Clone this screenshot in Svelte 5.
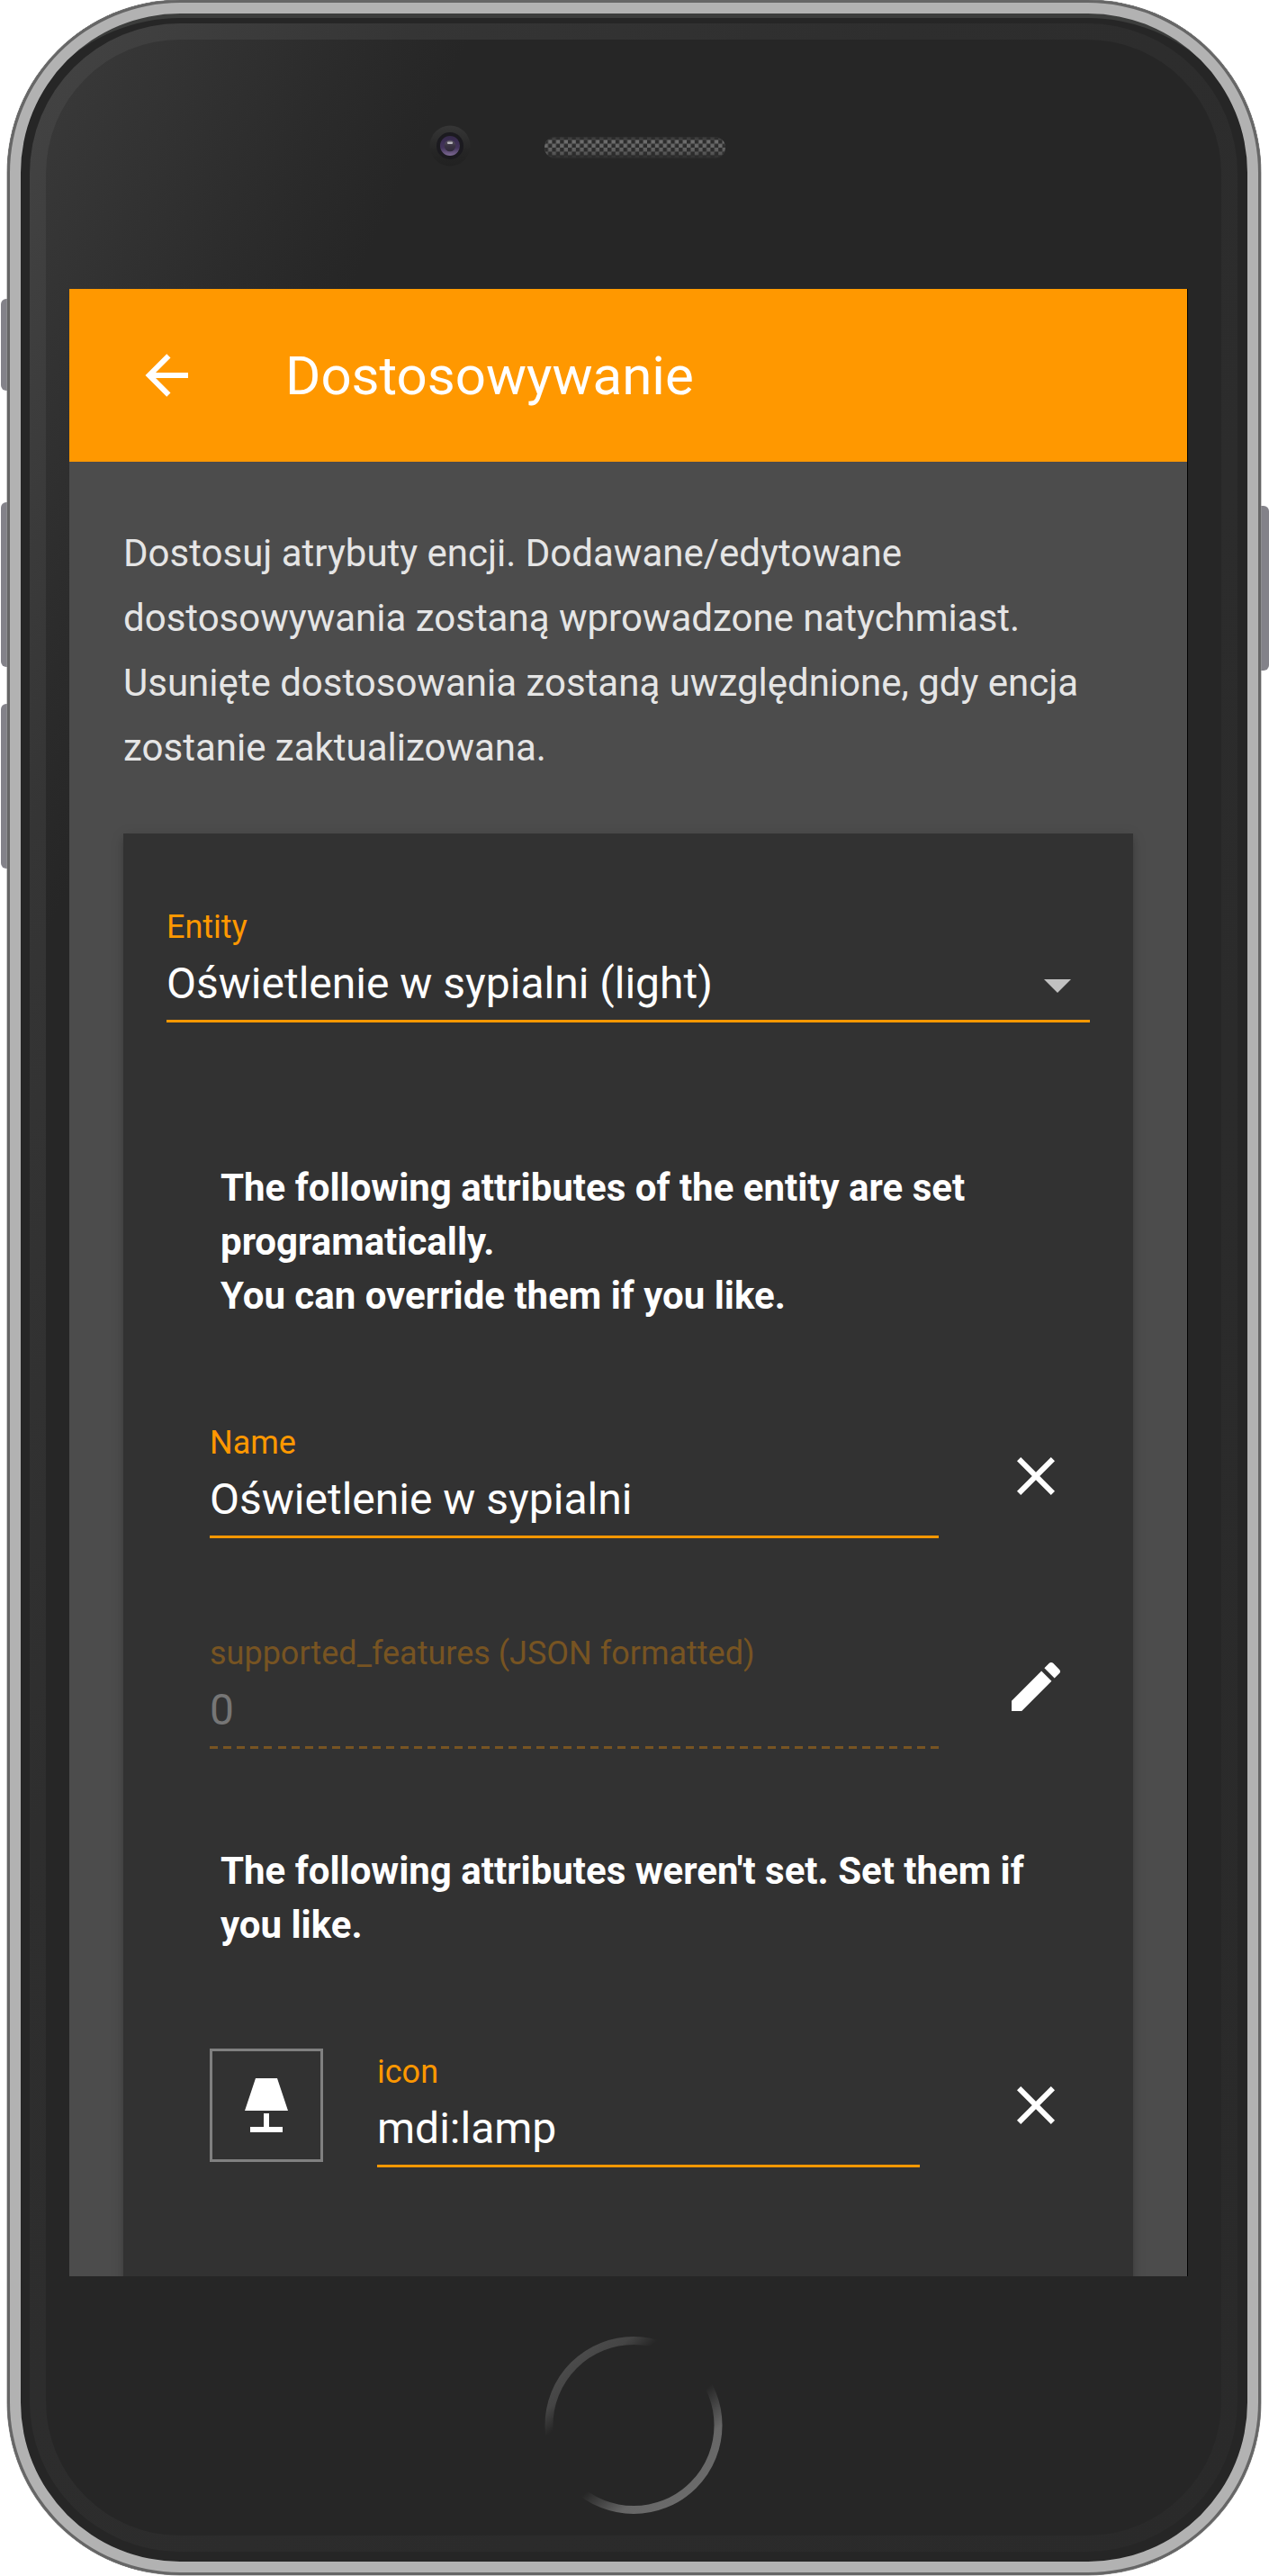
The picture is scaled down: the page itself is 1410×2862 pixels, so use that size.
<script>
  const paths = {
    back: 'M20,11V13H8L13.5,18.5L12.08,19.92L4.16,12L12.08,4.08L13.5,5.5L8,11H20Z',
    close:
      'M19,6.41L17.59,5L12,10.59L6.41,5L5,6.41L10.59,12L5,17.59L6.41,19L12,13.41L17.59,19L19,17.59L13.41,12L19,6.41Z',
    edit: 'M3 17.25V21h3.75L17.81 9.94l-3.75-3.75L3 17.25zM20.71 7.04c.39-.39.39-1.02 0-1.41l-2.34-2.34c-.39-.39-1.02-.39-1.41 0l-1.83 1.83 3.75 3.75 1.83-1.83z',
    lamp: 'M8,2H16L20,14H4L8,2M11,15H13V20H18V22H6V20H11V15Z',
    down: 'M7,10L12,15L17,10H7Z',
  };
</script>

{#snippet icon(name)}
  <svg class="icon {name}" viewBox="0 0 24 24"><path d={paths[name]} /></svg>
{/snippet}

<div class="device">
  <span class="key mute"></span>
  <span class="key up"></span>
  <span class="key volume"></span>
  <span class="key power"></span>

  <div class="shell">
    <div class="rim">
      <div class="face">
        <div class="top">
          <svg class="camera" viewBox="0 0 46 46">
            <defs>
              <linearGradient id="bezel" x1="0" y1="0" x2="0" y2="1">
                <stop offset="0" stop-color="#363636" />
                <stop offset="0.6" stop-color="#262626" />
                <stop offset="1" stop-color="#212121" />
              </linearGradient>
              <linearGradient id="lens" x1="0" y1="0" x2="0" y2="1">
                <stop offset="0" stop-color="#35294a" />
                <stop offset="0.6" stop-color="#44345c" />
                <stop offset="1" stop-color="#7d6a93" />
              </linearGradient>
              <linearGradient id="pupil" x1="0" y1="0" x2="0" y2="1">
                <stop offset="0" stop-color="#5b5663" />
                <stop offset="0.5" stop-color="#3a3343" />
                <stop offset="1" stop-color="#30293a" />
              </linearGradient>
            </defs>
            <circle cx="23" cy="23" r="22.5" fill="url(#bezel)" />
            <circle cx="23" cy="23" r="15" fill="#1b1a1f" />
            <circle cx="23" cy="23" r="11" fill="url(#lens)" />
            <circle cx="23" cy="23" r="6.3" fill="url(#pupil)" />
            <rect x="20" y="18.5" width="6" height="2.5" rx="1" fill="#b9b6bd" />
          </svg>
          <svg class="speaker" viewBox="0 0 201 24">
            <defs>
              <pattern id="mesh" x="-0.4" y="3.3" width="8.8" height="8.8" patternUnits="userSpaceOnUse">
                <rect width="4.4" height="4.4" fill="#2c2c2c" />
                <rect x="4.4" y="4.4" width="4.4" height="4.4" fill="#2c2c2c" />
              </pattern>
              <linearGradient id="grille" x1="0" y1="0" x2="0" y2="1">
                <stop offset="0" stop-color="#333" />
                <stop offset="0.14" stop-color="#484848" />
                <stop offset="0.15" stop-color="#6e6e6e" />
                <stop offset="0.5" stop-color="#666" />
                <stop offset="0.84" stop-color="#505050" />
                <stop offset="0.85" stop-color="#3a3a3a" />
                <stop offset="1" stop-color="#2c2c2c" />
              </linearGradient>
            </defs>
            <rect width="201" height="24" rx="12" fill="url(#grille)" />
            <rect width="201" height="24" rx="12" fill="url(#mesh)" />
          </svg>
        </div>

        <main class="screen">
          <header>
            {@render icon('back')}
            <h1>Dostosowywanie</h1>
          </header>
          <p class="intro">
            Dostosuj atrybuty encji. Dodawane/edytowane dostosowywania zostaną wprowadzone
            natychmiast. Usunięte dostosowania zostaną uwzględnione, gdy encja zostanie
            zaktualizowana.
          </p>
          <section class="card">
            <div class="field entity">
              <span class="label">Entity</span>
              <div class="value">
                <span>Oświetlenie w sypialni (light)</span>
                {@render icon('down')}
              </div>
            </div>

            <h2 class="set">
              The following attributes of the entity are set programatically.<br />You can override
              them if you like.
            </h2>

            <div class="row">
              <div class="field">
                <span class="label">Name</span>
                <div class="value">Oświetlenie w sypialni</div>
              </div>
              {@render icon('close')}
            </div>
            <div class="row">
              <div class="field disabled">
                <span class="label">supported_features (JSON formatted)</span>
                <div class="value">0</div>
              </div>
              {@render icon('edit')}
            </div>

            <h2 class="unset">The following attributes weren't set. Set them if you like.</h2>

            <div class="row last">
              <div class="preview">{@render icon('lamp')}</div>
              <div class="field short">
                <span class="label">icon</span>
                <div class="value">mdi:lamp</div>
              </div>
              {@render icon('close')}
            </div>
          </section>
        </main>

        <svg class="home" viewBox="0 0 198 198">
          <defs>
            <linearGradient
              id="ring"
              gradientUnits="userSpaceOnUse"
              x1="33.7"
              y1="22.8"
              x2="164.3"
              y2="174.2"
            >
              <stop offset="0" stop-color="#4b4b4b" />
              <stop offset="0.12" stop-color="#454545" />
              <stop offset="0.23" stop-color="#262626" />
              <stop offset="0.61" stop-color="#262626" />
              <stop offset="0.82" stop-color="#666" />
              <stop offset="1" stop-color="#6b6b6b" />
            </linearGradient>
          </defs>
          <circle cx="99" cy="98.5" r="94" fill="none" stroke="url(#ring)" stroke-width="9" />
        </svg>
      </div>
    </div>
  </div>
</div>

<style>
  :global(body) {
    background: #fff;
  }
  .device {
    position: relative;
    box-sizing: border-box;
    width: 1410px;
    height: 2862px;
    padding: 0 9px 1px 8px;
    overflow: hidden;
    font-family: Roboto, sans-serif;
  }
  /* Side buttons tucked behind the metal edge */
  .key {
    position: absolute;
    width: 16px;
    height: 183px;
    border-radius: 6px;
    background: #838289;
  }
  .mute {
    left: 0.5px;
    top: 332px;
    height: 102px;
  }
  .up {
    left: 0.5px;
    top: 558px;
  }
  .volume {
    left: 0.5px;
    top: 782px;
  }
  .power {
    right: 0.5px;
    top: 561.5px;
  }
  .shell {
    position: relative;
    box-sizing: border-box;
    height: 2861px;
    padding: 26px 26px 26px 25px;
    border-radius: 192px;
    background: #262626;
    box-shadow:
      0 0 0 0.5px #999,
      inset 0 0 0 3px #666,
      inset 0 0 0 15px #b2b2b2,
      inset 0 20px 0 0 #3c3d3c;
  }
  .rim {
    box-sizing: border-box;
    height: 2809px;
    padding: 18px;
    border-radius: 167px;
    background: linear-gradient(
      to bottom right,
      #444 0%,
      #353535 16%,
      #2e2e2e 36%,
      #2b2b2b 70%,
      #2a2a2a 100%
    );
  }
  .face {
    box-sizing: border-box;
    height: 2773px;
    padding: 0 37px 0 26px;
    border-radius: 149px;
    background: linear-gradient(to bottom right, #3a3a3a 0%, #2b2b2b 13%, #262626 18%);
  }
  .top {
    box-sizing: border-box;
    display: flex;
    align-items: flex-start;
    gap: 82px;
    height: 277px;
    padding: 95px 0 0 400px;
  }
  .camera {
    width: 46px;
    height: 46px;
  }
  .speaker {
    width: 201px;
    height: 24px;
    margin-top: 13px;
  }
  .home {
    display: block;
    width: 198px;
    height: 198px;
    margin: 67px auto 0 528px;
  }
  .screen {
    display: flex;
    flex-direction: column;
    width: 1242px;
    height: 2208px;
    overflow: hidden;
    background: #4c4c4c;
    box-shadow: 1px 0 0 #000;
  }
  .icon {
    flex: none;
    display: block;
    width: 72px;
    height: 72px;
    fill: #fff;
  }
  header {
    flex: none;
    display: flex;
    align-items: center;
    gap: 96px;
    height: 192px;
    padding-left: 72px;
    background: #ff9800;
    color: #fff;
  }
  h1 {
    margin: 0;
    padding-top: 2px;
    font-size: 60px;
    line-height: 72px;
    font-weight: 400;
  }
  .intro {
    flex: none;
    width: 1110px;
    margin: 66px 60px 59px;
    font-size: 42px;
    line-height: 72px;
    color: #e5e5e5;
  }
  .card {
    flex: none;
    box-sizing: border-box;
    width: 1122px;
    height: 1700px;
    margin-left: 60px;
    padding: 75px 48px 0;
    background: #323232;
    box-shadow:
      0 6px 6px rgba(0, 0, 0, 0.14),
      0 3px 15px rgba(0, 0, 0, 0.12),
      0 9px 3px -6px rgba(0, 0, 0, 0.2);
    color: #fff;
  }
  .field {
    box-sizing: border-box;
    height: 135px;
    border-bottom: 3px solid #ff9800;
  }
  .label {
    display: block;
    height: 56px;
    font-size: 36px;
    line-height: 58px;
    color: #ff9800;
    white-space: nowrap;
  }
  .value {
    display: flex;
    justify-content: space-between;
    align-items: center;
    height: 72px;
    font-size: 48px;
    line-height: 72px;
    white-space: nowrap;
  }
  .down {
    margin-top: 2px;
    fill: #c1c1c1;
  }
  h2 {
    margin: 0;
    padding: 0 60px;
    font-size: 42px;
    line-height: 60px;
    font-weight: 700;
  }
  .set {
    margin: 154px 0 104px;
  }
  .unset {
    margin: 7px 0 104px;
  }
  .row {
    display: flex;
    justify-content: space-between;
    align-items: flex-start;
    height: 234px;
    padding: 0 24px 0 48px;
  }
  .row .field {
    width: 810px;
  }
  .row > .icon {
    margin-top: 30px;
  }
  .field.disabled {
    border: 0;
    color: #767676;
    background: repeating-linear-gradient(90deg, #775422 0 9px, transparent 9px 15.11px) bottom /
      100% 3px no-repeat;
  }
  .disabled .label {
    color: #775422;
  }
  .preview {
    box-sizing: border-box;
    width: 126px;
    height: 126px;
    margin: 3px 60px 0 0;
    padding: 24px;
    border: 3px solid #808080;
  }
  .row .short {
    width: 603px;
    margin-right: auto;
  }
</style>
